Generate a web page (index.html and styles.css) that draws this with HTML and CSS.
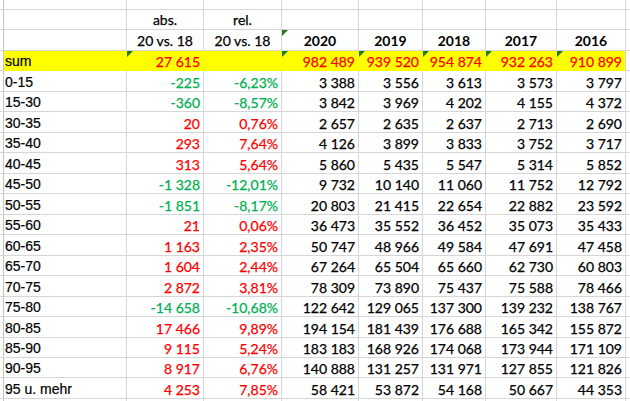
FILE: index.html
```html
<!DOCTYPE html>
<html lang="de">
<head>
<meta charset="utf-8">
<title>Tabelle</title>
<link rel="stylesheet" href="styles.css">
</head>
<body>
<div class="sheet">
  <div class="row top">
    <div class="c g"></div><div class="c"></div><div class="c"></div><div class="c"></div><div class="c"></div><div class="c"></div><div class="c"></div><div class="c"></div><div class="c"></div><div class="c r"></div>
  </div>
  <div class="row">
    <div class="c g"></div><div class="c l"></div><div class="c h">abs.</div><div class="c h">rel.</div><div class="c"></div><div class="c"></div><div class="c"></div><div class="c"></div><div class="c"></div><div class="c r"></div>
  </div>
  <div class="row">
    <div class="c g"></div><div class="c l"></div><div class="c h">20 vs. 18</div><div class="c h">20 vs. 18</div><div class="c h b tri">2020</div><div class="c h b">2019</div><div class="c h b">2018</div><div class="c h b">2017</div><div class="c h b">2016</div><div class="c r"></div>
  </div>
  <div class="row sum">
    <div class="c g"></div><div class="c l y">sum</div><div class="c y p tri">27 615</div><div class="c y"></div><div class="c y p tri">982 489</div><div class="c y p tri">939 520</div><div class="c y p tri">954 874</div><div class="c y p tri">932 263</div><div class="c y p tri end">910 899</div><div class="c r"></div>
  </div>
  <div class="row">
    <div class="c g"></div><div class="c l">0-15</div><div class="c n">-225</div><div class="c n">-6,23%</div><div class="c">3 388</div><div class="c">3 556</div><div class="c">3 613</div><div class="c">3 573</div><div class="c">3 797</div><div class="c r"></div>
  </div>
  <div class="row">
    <div class="c g"></div><div class="c l">15-30</div><div class="c n">-360</div><div class="c n">-8,57%</div><div class="c">3 842</div><div class="c">3 969</div><div class="c">4 202</div><div class="c">4 155</div><div class="c">4 372</div><div class="c r"></div>
  </div>
  <div class="row">
    <div class="c g"></div><div class="c l">30-35</div><div class="c p">20</div><div class="c p">0,76%</div><div class="c">2 657</div><div class="c">2 635</div><div class="c">2 637</div><div class="c">2 713</div><div class="c">2 690</div><div class="c r"></div>
  </div>
  <div class="row">
    <div class="c g"></div><div class="c l">35-40</div><div class="c p">293</div><div class="c p">7,64%</div><div class="c">4 126</div><div class="c">3 899</div><div class="c">3 833</div><div class="c">3 752</div><div class="c">3 717</div><div class="c r"></div>
  </div>
  <div class="row">
    <div class="c g"></div><div class="c l">40-45</div><div class="c p">313</div><div class="c p">5,64%</div><div class="c">5 860</div><div class="c">5 435</div><div class="c">5 547</div><div class="c">5 314</div><div class="c">5 852</div><div class="c r"></div>
  </div>
  <div class="row">
    <div class="c g"></div><div class="c l">45-50</div><div class="c n">-1 328</div><div class="c n">-12,01%</div><div class="c">9 732</div><div class="c">10 140</div><div class="c">11 060</div><div class="c">11 752</div><div class="c">12 792</div><div class="c r"></div>
  </div>
  <div class="row">
    <div class="c g"></div><div class="c l">50-55</div><div class="c n">-1 851</div><div class="c n">-8,17%</div><div class="c">20 803</div><div class="c">21 415</div><div class="c">22 654</div><div class="c">22 882</div><div class="c">23 592</div><div class="c r"></div>
  </div>
  <div class="row">
    <div class="c g"></div><div class="c l">55-60</div><div class="c p">21</div><div class="c p">0,06%</div><div class="c">36 473</div><div class="c">35 552</div><div class="c">36 452</div><div class="c">35 073</div><div class="c">35 433</div><div class="c r"></div>
  </div>
  <div class="row">
    <div class="c g"></div><div class="c l">60-65</div><div class="c p">1 163</div><div class="c p">2,35%</div><div class="c">50 747</div><div class="c">48 966</div><div class="c">49 584</div><div class="c">47 691</div><div class="c">47 458</div><div class="c r"></div>
  </div>
  <div class="row">
    <div class="c g"></div><div class="c l">65-70</div><div class="c p">1 604</div><div class="c p">2,44%</div><div class="c">67 264</div><div class="c">65 504</div><div class="c">65 660</div><div class="c">62 730</div><div class="c">60 803</div><div class="c r"></div>
  </div>
  <div class="row">
    <div class="c g"></div><div class="c l">70-75</div><div class="c p">2 872</div><div class="c p">3,81%</div><div class="c">78 309</div><div class="c">73 890</div><div class="c">75 437</div><div class="c">75 588</div><div class="c">78 466</div><div class="c r"></div>
  </div>
  <div class="row">
    <div class="c g"></div><div class="c l">75-80</div><div class="c n">-14 658</div><div class="c n">-10,68%</div><div class="c">122 642</div><div class="c">129 065</div><div class="c">137 300</div><div class="c">139 232</div><div class="c">138 767</div><div class="c r"></div>
  </div>
  <div class="row">
    <div class="c g"></div><div class="c l">80-85</div><div class="c p">17 466</div><div class="c p">9,89%</div><div class="c">194 154</div><div class="c">181 439</div><div class="c">176 688</div><div class="c">165 342</div><div class="c">155 872</div><div class="c r"></div>
  </div>
  <div class="row">
    <div class="c g"></div><div class="c l">85-90</div><div class="c p">9 115</div><div class="c p">5,24%</div><div class="c">183 183</div><div class="c">168 926</div><div class="c">174 068</div><div class="c">173 944</div><div class="c">171 109</div><div class="c r"></div>
  </div>
  <div class="row">
    <div class="c g"></div><div class="c l">90-95</div><div class="c p">8 917</div><div class="c p">6,76%</div><div class="c">140 888</div><div class="c">131 257</div><div class="c">131 971</div><div class="c">127 855</div><div class="c">121 826</div><div class="c r"></div>
  </div>
  <div class="row">
    <div class="c g"></div><div class="c l">95 u. mehr</div><div class="c p">4 253</div><div class="c p">7,85%</div><div class="c">58 421</div><div class="c">53 872</div><div class="c">54 168</div><div class="c">50 667</div><div class="c">44 353</div><div class="c r"></div>
  </div>
  <div class="row tail">
    <div class="c g"></div><div class="c"></div><div class="c"></div><div class="c"></div><div class="c"></div><div class="c"></div><div class="c"></div><div class="c"></div><div class="c"></div><div class="c r"></div>
  </div>
</div>
</body>
</html>
```
FILE: styles.css
```css
* {
  box-sizing: border-box;
}

html,
body {
  margin: 0;
  padding: 0;
  background: #ffffff;
}

body {
  width: 630px;
  height: 401px;
  overflow: hidden;
}

.sheet {
  display: flex;
  flex-direction: column;
  width: 630px;
}

.row {
  display: grid;
  grid-template-columns: 4px 123px 77px 78px 77px 64px 63px 71px 69px 1fr;
  height: 20.47px;
  flex: none;
}

.row.top {
  height: 10px;
}

.row.tail {
  height: 6px;
}

.c {
  position: relative;
  display: flex;
  align-items: flex-end;
  justify-content: flex-end;
  padding: 0 3px 0 0;
  border-right: 1px solid #d6d6d6;
  border-bottom: 1px solid #d6d6d6;
  font-family: Lato, "Open Sans", sans-serif;
  font-size: 14px;
  line-height: 16px;
  color: #000000;
  white-space: nowrap;
  overflow: visible;
  -webkit-text-stroke: 0.25px currentColor;
}

.c.g {
  border-right-color: #c4c4c4;
  padding: 0;
}

.c.r {
  border-right: none;
  padding: 0;
}

.c.l {
  justify-content: flex-start;
  padding: 0 0 1px 1px;
  font-family: "Liberation Sans", Arial, sans-serif;
  font-size: 14px;
  -webkit-text-stroke: 0.2px currentColor;
}

.c.h {
  justify-content: center;
  padding: 0 0 1px 0;
}

.c.b {
  font-weight: 700;
  -webkit-text-stroke: 0;
}

.c.n {
  color: #00b050;
}

.c.p {
  color: #ff0000;
}

.c.y {
  background: #ffff00;
  border-right-color: #ffff00;
  border-bottom-color: #ffff00;
}

.c.y.end {
  border-right-color: #d6d6d6;
}

.c.tri::before {
  content: "";
  position: absolute;
  left: 0;
  top: 0;
  width: 0;
  height: 0;
  border-top: 6px solid #1e7b1e;
  border-right: 6px solid transparent;
}
```
